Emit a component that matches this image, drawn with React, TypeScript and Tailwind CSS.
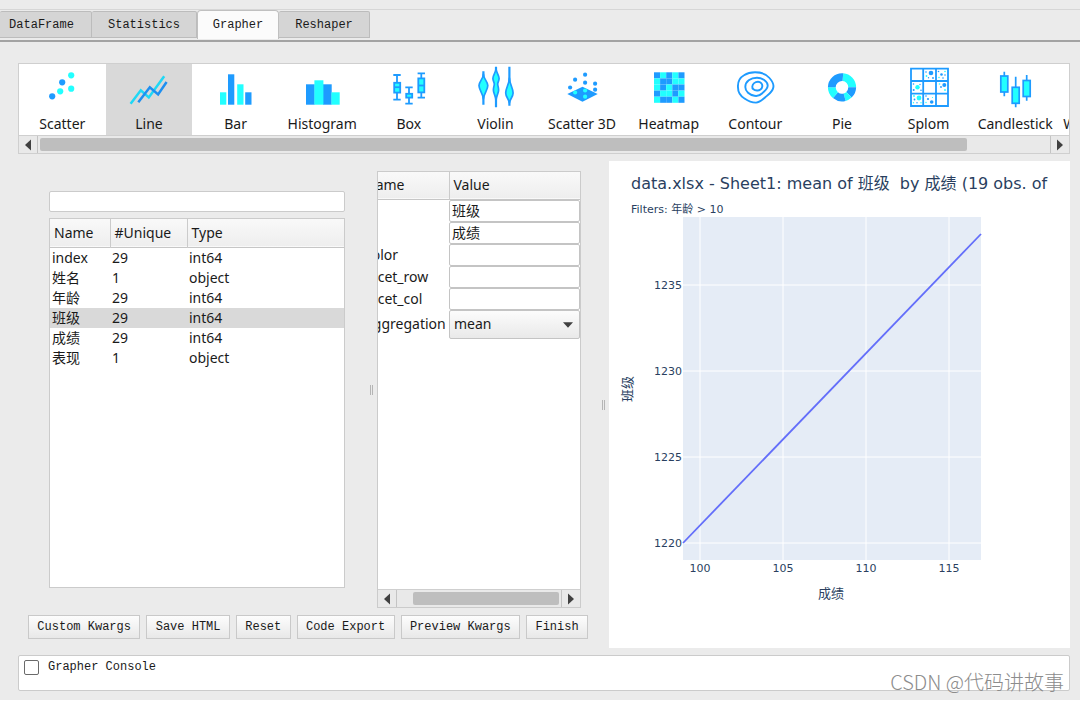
import { useState } from "react";
import type { ReactNode } from "react";

const BLUE = "#1e9bff";
const CYAN = "#22ffff";

const tabs = [
  { name: "DataFrame", style: "w-[92px] pr-[8px]" },
  { name: "Statistics", style: "w-[105px]" },
  { name: "Grapher", style: "w-[82px]" },
  { name: "Reshaper", style: "w-[91px]" },
];

const columns = [
  { name: "index", unique: 29, type: "int64" },
  { name: "姓名", unique: 1, type: "object" },
  { name: "年龄", unique: 29, type: "int64" },
  { name: "班级", unique: 29, type: "int64" },
  { name: "成绩", unique: 29, type: "int64" },
  { name: "表现", unique: 1, type: "object" },
];

const params = [
  { name: "y", value: "班级" },
  { name: "x", value: "成绩" },
  { name: "color", value: "" },
  { name: "facet_row", value: "" },
  { name: "facet_col", value: "" },
];

const actions = [
  "Custom Kwargs",
  "Save HTML",
  "Reset",
  "Code Export",
  "Preview Kwargs",
  "Finish",
];

function ScatterIcon() {
  return (
    <>
      <circle cx="14.2" cy="32.3" r="3.1" fill={BLUE} />
      <circle cx="22.2" cy="27.3" r="3.1" fill={CYAN} />
      <circle cx="24.2" cy="18.3" r="3.1" fill={BLUE} />
      <circle cx="33.2" cy="11.3" r="3.1" fill={CYAN} />
      <circle cx="33.2" cy="24.7" r="3.1" fill={CYAN} />
    </>
  );
}

function LineIcon() {
  return (
    <g fill="none" strokeWidth="2.5">
      <path d="M5.6 39.7L15.8 26.3L23.8 33.5L39.2 12.2" stroke="#1fd8f5" />
      <path d="M13.3 38.2L24.8 23.3L33.1 30.5L41.6 18" stroke="#1e8ff0" />
    </g>
  );
}

function BarIcon() {
  return (
    <>
      <rect x="8" y="28.3" width="6.3" height="12.4" fill={CYAN} />
      <rect x="16" y="10.3" width="6.3" height="30.4" fill={BLUE} />
      <rect x="25.2" y="20.3" width="6.3" height="20.4" fill={CYAN} />
      <rect x="33.2" y="28.3" width="6.3" height="12.4" fill={BLUE} />
    </>
  );
}

function HistogramIcon() {
  return (
    <>
      <rect x="8" y="20.3" width="8.7" height="20.4" fill={BLUE} />
      <rect x="25" y="20.3" width="8.7" height="20.4" fill={BLUE} />
      <rect x="16.4" y="16.3" width="9" height="24.4" fill={CYAN} />
      <rect x="33.4" y="28.3" width="8.3" height="12.4" fill={CYAN} />
    </>
  );
}

function BoxIcon() {
  return (
    <g stroke={BLUE} strokeWidth="1.8" fill={CYAN}>
      <path d="M12 11V35.7M8.3 11H15.7M8.3 35.7H15.7" />
      <rect x="9.2" y="18.8" width="6" height="9.8" />
      <path d="M9 23.2H15.4" />
      <path d="M24 23.3V39.7M20.3 23.3H27.7M20.3 39.7H27.7" />
      <rect x="21.2" y="29.8" width="6" height="3.8" />
      <path d="M36.3 9.3V33.7M32.6 9.3H40M32.6 33.7H40" />
      <rect x="33.3" y="14.4" width="6" height="14" />
      <path d="M33 21.5H39.6" />
    </g>
  );
}

function ViolinIcon() {
  return (
    <g stroke={BLUE} strokeWidth="1.7" fill={CYAN} strokeLinejoin="round">
      <path d="M12.4 7.3V40.7M25 2.7V43.3M38.4 2.7V41.7" strokeWidth="2.2" />
      <path d="M12.4 10C12.4 15 8 17.5 8 21.5C8 26 11.8 29 12.4 35C13 29 16.8 26 16.8 21.5C16.8 17.5 12.4 15 12.4 10Z" />
      <path d="M25 5C24.5 9 21.9 11 21.9 14.5C21.9 17 23.3 18 23.3 20C23.3 22 22.4 23 22.4 26C22.4 30 24.8 31 25 37C25.2 31 27.6 30 27.6 26C27.6 23 26.7 22 26.7 20C26.7 18 28.1 17 28.1 14.5C28.1 11 25.5 9 25 5Z" />
      <path d="M38.4 14C38 21 34.7 24 34.7 29C34.7 33 38 35 38.4 39C38.8 35 42.1 33 42.1 29C42.1 24 38.8 21 38.4 14Z" />
    </g>
  );
}

function Scatter3DIcon() {
  const back = [
    [27.1, 10.7],
    [17.1, 15.7],
    [27.1, 18.7],
    [37.1, 19.7],
    [12.1, 23.5],
    [37.1, 25.7],
  ];
  const front = [
    [17.1, 28.5],
    [27.1, 26.5],
    [27.1, 32.7],
  ];
  return (
    <>
      <path d="M9.3 30L24.5 22.7L39.7 30L24.5 37.8Z" fill={BLUE} />
      {back.map(([x, y]) => (
        <circle key={`${x}-${y}`} cx={x} cy={y} r="2.1" fill={BLUE} />
      ))}
      {front.map(([x, y]) => (
        <circle key={`${x}-${y}`} cx={x} cy={y} r="2.1" fill={CYAN} />
      ))}
    </>
  );
}

function HeatmapIcon() {
  const cells = ["BCBCB", "CBBCC", "CBCBB", "BCCBC", "CBBCB"];
  return (
    <>
      {cells.map((row, r) =>
        row.split("").map((c, i) => (
          <rect
            key={`${r}-${i}`}
            x={9 + i * 6.1}
            y={8.3 + r * 6.1}
            width="6.1"
            height="6.1"
            fill={c === "B" ? BLUE : CYAN}
          />
        ))
      )}
    </>
  );
}

function ContourIcon() {
  return (
    <g fill="none" stroke={BLUE} strokeWidth="1.9">
      <path d="M24 8.3C31 8.3 35.5 10 38.5 14C41.5 17.5 43.2 20 42.3 23.5C41.5 28 38 30 34.5 33C31 36 29 38.6 25 38.6C20.5 38.6 17 37 13.5 34.5C9.5 32 7 28.5 7 23.5C6.5 17.5 9 13.5 13 11.2C16.5 9 20 8.3 24 8.3Z" />
      <path d="M26 13.7C31 13.7 36.7 17 36.7 21.5C36.7 25 33.5 27 31 29.5C28.5 32 26.5 32.3 23.5 31.8C18.5 31 14.3 27.5 14.3 23C14.3 17.5 19.5 13.7 26 13.7Z" />
      <path d="M27 17.8C29.5 17.8 31.6 20 31.3 22.3C31 25 28.5 26.8 26 26.5C23 26.2 21 25 21.3 22.5C21.6 20 24 17.8 27 17.8Z" />
    </g>
  );
}

function PieIcon() {
  // start and end angle of every slice, clockwise from the top
  const slices = [
    [5, 90, CYAN],
    [90, 137, BLUE],
    [137, 165, CYAN],
    [165, 220, BLUE],
    [220, 270, CYAN],
    [270, 365, BLUE],
  ] as const;
  const point = (deg: number) => {
    const rad = (deg * Math.PI) / 180;
    return `${24 + 10.2 * Math.sin(rad)} ${23.3 - 10.2 * Math.cos(rad)}`;
  };
  return (
    <>
      {slices.map(([from, to, color]) => (
        <path
          key={from}
          d={`M${point(from)}A10.2 10.2 0 0 1 ${point(to)}`}
          fill="none"
          stroke={color}
          strokeWidth="7.8"
        />
      ))}
    </>
  );
}

function SplomIcon() {
  const dots: [number, number, number, string][] = [
    [26, 9, 2.3, BLUE],
    [21, 8, 0.8, BLUE],
    [21.5, 12, 0.9, CYAN],
    [28, 14, 0.9, BLUE],
    [23.5, 13.7, 0.7, BLUE],
    [33.5, 7.5, 0.8, BLUE],
    [36.5, 10.5, 1.3, BLUE],
    [40, 7.5, 0.8, CYAN],
    [40, 11, 0.8, BLUE],
    [34, 13.5, 0.8, CYAN],
    [38, 14, 0.8, BLUE],
    [8.5, 20, 0.8, BLUE],
    [12.5, 23.3, 2.2, CYAN],
    [8.7, 26, 1, BLUE],
    [15, 20.5, 0.7, BLUE],
    [16, 26.3, 0.8, BLUE],
    [39.3, 21, 2, BLUE],
    [34.5, 20, 0.8, CYAN],
    [36, 23, 0.9, BLUE],
    [40, 26, 0.9, CYAN],
    [9, 32, 0.9, CYAN],
    [14, 34, 2.4, CYAN],
    [9.5, 35.5, 0.9, BLUE],
    [8.5, 38.7, 0.7, CYAN],
    [12, 38.8, 0.7, BLUE],
    [16, 38.8, 0.7, CYAN],
    [21, 32, 0.8, BLUE],
    [23, 35, 1.1, BLUE],
    [26.7, 38, 1.8, BLUE],
    [21, 38.5, 0.7, CYAN],
    [27.5, 33.5, 0.6, CYAN],
  ];
  return (
    <>
      <path
        d="M6 4.7H43V42H6ZM18.2 4.7V42M31 4.7V42M6 17H43M6 29.6H43"
        fill="none"
        stroke={BLUE}
        strokeWidth="1.8"
      />
      {dots.map(([x, y, r, color]) => (
        <circle key={`${x}-${y}`} cx={x} cy={y} r={r} fill={color} />
      ))}
    </>
  );
}

function CandlestickIcon() {
  return (
    <g stroke={BLUE} strokeWidth="1.7" fill={CYAN}>
      <path d="M13.3 7.7V32.3M24.7 12.7V43.3M35.7 11V36.7" />
      <rect x="9.8" y="12" width="7" height="16" />
      <rect x="21.2" y="23.3" width="7" height="16" />
      <rect x="32.2" y="16.5" width="7" height="16" />
    </g>
  );
}

const charts: { name: string; icon: ReactNode }[] = [
  { name: "Scatter", icon: <ScatterIcon /> },
  { name: "Line", icon: <LineIcon /> },
  { name: "Bar", icon: <BarIcon /> },
  { name: "Histogram", icon: <HistogramIcon /> },
  { name: "Box", icon: <BoxIcon /> },
  { name: "Violin", icon: <ViolinIcon /> },
  { name: "Scatter 3D", icon: <Scatter3DIcon /> },
  { name: "Heatmap", icon: <HeatmapIcon /> },
  { name: "Contour", icon: <ContourIcon /> },
  { name: "Pie", icon: <PieIcon /> },
  { name: "Splom", icon: <SplomIcon /> },
  { name: "Candlestick", icon: <CandlestickIcon /> },
  { name: "Word Cloud", icon: null },
];

function ScrollBar({ thumb }: { thumb: string }) {
  return (
    <div className="flex h-[18px] border-t border-[#cfcfcf] bg-[#e9e9e9]">
      <button
        aria-label="Scroll left"
        className="flex w-[19px] shrink-0 items-center justify-center border-r border-[#c4c4c4]"
      >
        <svg className="h-3 w-2" viewBox="0 0 8 12">
          <path d="M7 0.5V11.5L1 6Z" fill="#404040" />
        </svg>
      </button>
      <div className="flex flex-1 items-center px-0.5">
        <div className={`h-[13px] rounded-xs bg-[#bebebe] ${thumb}`} />
      </div>
      <button
        aria-label="Scroll right"
        className="flex w-[19px] shrink-0 items-center justify-center border-l border-[#c4c4c4]"
      >
        <svg className="h-3 w-2" viewBox="0 0 8 12">
          <path d="M1 0.5V11.5L7 6Z" fill="#404040" />
        </svg>
      </button>
    </div>
  );
}

function Plot() {
  const xTicks = [
    [91, 100],
    [174, 105],
    [257, 110],
    [340, 115],
  ];
  const yTicks = [
    [124, 1235],
    [210, 1230],
    [296, 1225],
    [382, 1220],
  ];
  return (
    <svg
      viewBox="0 0 461 487"
      className="h-auto w-full bg-white font-['DejaVu_Sans','Noto_Sans_CJK_SC',sans-serif]"
    >
      <g fill="#2a3f5f">
        <text x="22" y="28" fontSize="16" xmlSpace="preserve">
          {"data.xlsx - Sheet1: mean of 班级  by 成绩 (19 obs. of"}
        </text>
        <text x="22" y="52" fontSize="11">
          Filters: 年龄 &gt; 10
        </text>
      </g>
      <rect x="74" y="56" width="298" height="343" fill="#e5ecf6" />
      {xTicks.map(([x, label]) => (
        <g key={label}>
          <path d={`M${x} 56V399`} stroke="#fff" />
          <text x={x} y="411" fontSize="11" fill="#2a3f5f" textAnchor="middle">
            {label}
          </text>
        </g>
      ))}
      {yTicks.map(([y, label]) => (
        <g key={label}>
          <path d={`M74 ${y}H372`} stroke="#fff" />
          <text x="73" y={y + 4} fontSize="11" fill="#2a3f5f" textAnchor="end">
            {label}
          </text>
        </g>
      ))}
      <path d="M74 382L372 73" stroke="#636efa" strokeWidth="1.8" />
      <text x="222" y="437" fontSize="13" fill="#2a3f5f" textAnchor="middle">
        成绩
      </text>
      <text
        transform="translate(23 228) rotate(-90)"
        fontSize="13"
        fill="#2a3f5f"
        textAnchor="middle"
      >
        班级
      </text>
    </svg>
  );
}

export default function App() {
  const [tab, setTab] = useState("Grapher");
  const [chart, setChart] = useState("Line");
  const [column, setColumn] = useState("班级");

  return (
    <div className="relative flex min-h-screen flex-col overflow-hidden border-b border-white bg-[#ebebeb] pt-[9px] font-['Noto_Sans','Noto_Sans_CJK_SC',sans-serif] text-sm text-[#1a1a1a]">
      {/* Tabs */}
      <div className="flex h-[33px] items-end border-t border-b-2 border-t-[#d6d6d6] border-b-[#a3a3a3] font-['Liberation_Mono',monospace] text-xs">
        {tabs.map((t) => (
          <button
            key={t.name}
            onClick={() => setTab(t.name)}
            className={
              t.name === tab
                ? `${t.style} mb-px h-[29px] rounded-t-sm border border-b-0 border-[#c0c0c0] bg-[#fbfbfb]`
                : `${t.style} mb-0.5 h-[27px] rounded-t-xs border border-l-0 border-[#bcbcbc] bg-[#d5d5d5]`
            }
          >
            {t.name}
          </button>
        ))}
      </div>

      {/* Chart types */}
      <div className="mt-[21px] mr-[10px] ml-[18px] border border-[#cfcfcf] bg-white">
        <div className="flex h-[71px] overflow-hidden">
          {charts.map((c) => (
            <button
              key={c.name}
              onClick={() => setChart(c.name)}
              className={`flex w-[8.25%] shrink-0 flex-col items-center whitespace-nowrap ${
                c.name === chart ? "bg-[#d9d9d9]" : ""
              }`}
            >
              <svg className="size-12 shrink-0" viewBox="0 0 48 48">
                {c.icon}
              </svg>
              <span className="leading-6">{c.name}</span>
            </button>
          ))}
        </div>
        <ScrollBar thumb="w-[92%]" />
      </div>

      <div className="mt-[7px] mr-[10px] ml-[18px] grid grid-cols-[591fr_461fr] items-start">
        {/* Settings */}
        <div className="flex flex-col self-stretch">
          <div className="flex flex-1 items-stretch pt-[10px]">
            <div className="mt-5 mb-5 ml-[31px] flex flex-[298] flex-col gap-[6px]">
              <input
                aria-label="Search columns"
                className="h-[21px] w-full rounded-xs border border-[#cbcbcb] bg-white px-1 outline-none"
              />
              <div className="flex-1 border border-[#cbcbcb] bg-white">
                <table className="w-full table-fixed border-collapse text-left">
                  <thead>
                    <tr className="h-7 border-b border-[#c6c6c6] bg-linear-to-b from-[#f9f9f9] to-[#eeeeee]">
                      <th className="w-[60px] border-r border-[#cbcbcb] pl-1 font-normal">Name</th>
                      <th className="w-[77px] border-r border-[#cbcbcb] pl-1 font-normal">#Unique</th>
                      <th className="pl-1 font-normal">Type</th>
                    </tr>
                  </thead>
                  <tbody>
                    {columns.map((c) => (
                      <tr
                        key={c.name}
                        onClick={() => setColumn(c.name)}
                        className={c.name === column ? "bg-[#d9d9d9] leading-5" : "leading-5"}
                      >
                        <td className="pl-0.5">{c.name}</td>
                        <td className="pl-0.5">{c.unique}</td>
                        <td className="pl-0.5">{c.type}</td>
                      </tr>
                    ))}
                  </tbody>
                </table>
              </div>
            </div>

            <div className="flex w-8 items-center justify-end pr-1">
              <div className="h-[10px] w-[3px] border-x border-[#b5b5b5]" />
            </div>

            <div className="flex flex-[203] flex-col border border-[#cbcbcb] bg-white">
              <div className="flex-1 overflow-hidden">
                <table className="-ml-5 w-[calc(100%+20px)] table-fixed border-collapse text-left">
                  <thead>
                    <tr className="h-[27px] border-b border-[#c6c6c6] bg-linear-to-b from-[#f9f9f9] to-[#eeeeee]">
                      <th className="w-[91px] border-r border-[#cbcbcb] pl-[7px] font-normal">Name</th>
                      <th className="pl-1 font-normal">Value</th>
                    </tr>
                  </thead>
                  <tbody>
                    {params.map((p) => (
                      <tr key={p.name} className="h-[22px]">
                        <td className="p-0 pl-[7px] leading-5">
                          <label htmlFor={p.name}>{p.name}</label>
                        </td>
                        <td className="p-0">
                          <input
                            id={p.name}
                            defaultValue={p.value}
                            className="block h-[22px] w-full rounded-xs border border-[#c4c4c4] bg-white px-0.5 pb-0.5 outline-none"
                          />
                        </td>
                      </tr>
                    ))}
                    <tr className="h-[29px]">
                      <td className="p-0 pl-[7px]">
                        <label htmlFor="aggregation">aggregation</label>
                      </td>
                      <td className="relative p-0">
                        <select
                          id="aggregation"
                          className="block h-[29px] w-full appearance-none rounded-xs border border-[#c4c4c4] bg-linear-to-b from-[#fcfcfc] to-[#e9e9e9] px-1"
                        >
                          <option>mean</option>
                          <option>median</option>
                          <option>sum</option>
                        </select>
                        <svg
                          className="pointer-events-none absolute top-3 right-[7px] h-[6px] w-[10px]"
                          viewBox="0 0 10 6"
                        >
                          <path d="M0 0.3H10L5 5.7Z" fill="#404040" />
                        </svg>
                      </td>
                    </tr>
                  </tbody>
                </table>
              </div>
              <ScrollBar thumb="ml-[14px] w-[146px]" />
            </div>
            <div className="w-[28px]" />
          </div>

          <div className="mt-[7px] mb-[9px] ml-[10px] flex gap-[6px] font-['Liberation_Mono',monospace] text-xs">
            {actions.map((a) => (
              <button
                key={a}
                className="h-6 flex-auto border border-[#c9c9c9] bg-linear-to-b from-[#fdfdfd] to-[#e8e8e8] px-1.5 whitespace-nowrap"
              >
                {a}
              </button>
            ))}
            <div className="w-[15px]" />
          </div>
        </div>

        {/* Splitter handle lies between the settings and the plot */}
        <div className="relative">
          <div className="absolute top-[49%] -left-[7px] h-[10px] w-[3px] border-x border-[#b5b5b5]" />
          <Plot />
        </div>
      </div>

      <div className="mt-[7px] mr-[10px] mb-[9px] ml-[18px] flex-1 rounded-xs border border-[#cbcbcb] bg-white px-[5px] pt-[3px]">
        <label className="flex items-center gap-[9px] font-['Liberation_Mono',monospace] text-xs">
          <input
            type="checkbox"
            className="size-[15px] appearance-none rounded-xs border border-[#6a6a6a] bg-white checked:bg-[#6a6a6a]"
          />
          Grapher Console
        </label>
      </div>

      <div className="pointer-events-none absolute right-4 bottom-1 font-['Noto_Sans_CJK_SC',sans-serif] text-[20px] leading-7 font-light text-[#8c8c8c]">
        CSDN @代码讲故事
      </div>
    </div>
  );
}
